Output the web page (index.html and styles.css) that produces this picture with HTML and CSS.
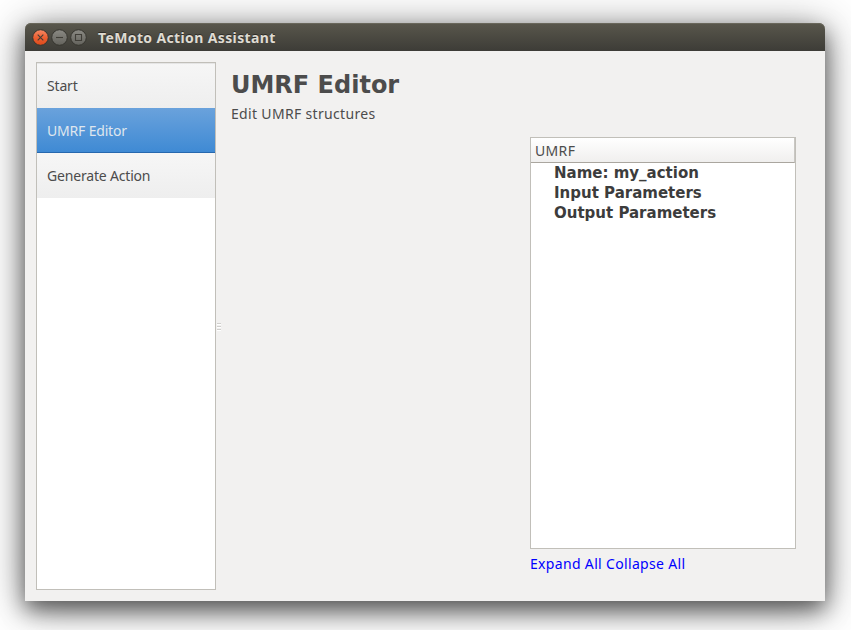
FILE: index.html
```html
<!DOCTYPE html>
<html lang="en">
<head>
<meta charset="utf-8">
<title>TeMoto Action Assistant</title>
<link rel="stylesheet" href="styles.css">
</head>
<body>
<div class="window">
  <header class="titlebar">
    <svg class="controls" width="56" height="18" viewBox="0 0 56 18" aria-hidden="true">
      <defs>
        <linearGradient id="close" x1="0" y1="0" x2="0" y2="1"><stop offset="0" stop-color="#f58a66"/><stop offset=".5" stop-color="#ec6033"/><stop offset="1" stop-color="#dd4a1a"/></linearGradient>
        <linearGradient id="plain" x1="0" y1="0" x2="0" y2="1"><stop offset="0" stop-color="#8b8a84"/><stop offset="1" stop-color="#63625c"/></linearGradient>
      </defs>
      <g stroke="#36352f" stroke-width="1">
        <circle cx="8.5" cy="9.5" r="7.8" fill="url(#close)"/>
        <circle cx="27.5" cy="9.5" r="7.8" fill="url(#plain)"/>
        <circle cx="46.5" cy="9.5" r="7.8" fill="url(#plain)"/>
      </g>
      <g fill="none" stroke="#403e38" stroke-width="1.1">
        <path d="M5.7 6.7l5.6 5.6M11.3 6.7l-5.6 5.6"/>
        <path d="M24 9.5h7"/>
        <path d="M43.5 6.5h6v6h-6z"/>
      </g>
    </svg>
    <span class="title">TeMoto Action Assistant</span>
  </header>
  <main class="content">
    <nav class="steps">
      <div class="step">Start</div>
      <div class="step selected">UMRF Editor</div>
      <div class="step">Generate Action</div>
    </nav>
    <div class="splitter"><i></i><i></i><i></i></div>
    <section class="page">
      <h1>UMRF Editor</h1>
      <p class="subtitle">Edit UMRF structures</p>
      <div class="panel">
        <div class="tree">
          <div class="tree-head">UMRF</div>
          <div class="row">Name: my_action</div>
          <div class="row">Input Parameters</div>
          <div class="row">Output Parameters</div>
        </div>
        <div class="links"><a>Expand All</a> <a>Collapse All</a></div>
      </div>
    </section>
  </main>
</div>
</body>
</html>
```
FILE: styles.css
```css
* { box-sizing: border-box; }
body {
  margin: 0;
  height: 630px;
  padding: 23px 26px 29px 25px;
  overflow: hidden;
  background: #fff;
  color: #4c4c4c;
  font: 14px/20px "Noto Sans", sans-serif;
  white-space: nowrap;
}
.window {
  display: flex;
  flex-direction: column;
  height: 578px;
  border-radius: 6px 6px 0 0;
  background: #f2f1f0;
  box-shadow: 0 9px 22px rgba(0,0,0,.55), 0 5px 45px rgba(0,0,0,.4);
}
.titlebar {
  display: flex;
  align-items: center;
  height: 28px;
  padding-left: 7px;
  border-radius: 6px 6px 0 0;
  background: linear-gradient(#59574c, #3d3c37);
  box-shadow: inset 0 1px #69675b;
}
.title {
  margin: 2px 0 0 10px;
  color: #dfdbd2;
  font-weight: bold;
  font-size: 14px;
  letter-spacing: .37px;
  text-shadow: 0 -1px #2d2c28;
}
.content { display: flex; flex: 1; padding: 11px; }
.steps {
  width: 180px;
  height: 528px;
  border: 1px solid #c1bfb9;
  background: #fff;
  letter-spacing: -.18px;
}
.step {
  height: 45px;
  padding: 13px 10px 0;
  background: linear-gradient(#f6f6f6, #eee);
}
.step:first-child { box-shadow: inset 0 1px #e5e5e5; }
.step.selected {
  border-bottom: 1px solid #2768ae;
  background: linear-gradient(#6aa2dc, #3f8ad4);
  color: #dfe6ee;
}
.splitter {
  display: flex;
  flex-direction: column;
  justify-content: center;
  gap: 2px;
  width: 5px;
  padding-left: 1px;
}
.splitter i { width: 4px; height: 1px; background: #d0cfcd; box-shadow: 0 1px #fff; }
.page { flex: 1; padding: 8px 18px 0 10px; }
h1 { margin: 0; font: bold 24px/30px "DejaVu Sans", sans-serif; }
.subtitle { margin: 4px 0 13px; letter-spacing: .33px; }
.panel { width: 266px; margin-left: auto; }
.tree { height: 412px; border: 1px solid #c1bfb9; background: #fff; }
.tree-head {
  height: 25px;
  padding: 3px 4px;
  border-right: 1px solid #c9c7c3;
  border-bottom: 1px solid #aaa69f;
  background: linear-gradient(#fff, #f0efee);
  letter-spacing: .33px;
}
.row {
  height: 20px;
  padding-left: 23px;
  color: #3c3c3c;
  font: bold 15px/20px "DejaVu Sans", sans-serif;
}
.links { margin-top: 5px; color: #0000ff; letter-spacing: .33px; }
```
